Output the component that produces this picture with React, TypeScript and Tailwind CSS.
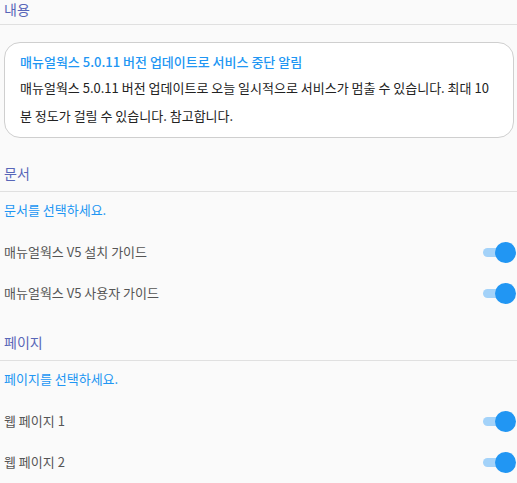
import React, { useState } from 'react';

const font = { fontFamily: '"Noto Sans CJK KR", "Noto Sans", sans-serif' };

interface ToggleProps {
    checked: boolean;
    onChange: () => void;
}

const Toggle: React.FC<ToggleProps> = ({ checked, onChange }) => (
    <button onClick={onChange} className="relative w-[34px] h-[20px] shrink-0">
        <span
            className={`absolute left-[1px] top-[6px] h-[9px] w-[26px] rounded-full ${
                checked ? 'bg-[#a3d2f9]' : 'bg-[#c8c8c8]'
            }`}
        />
        <span
            className={`absolute top-0 h-[21px] w-[21px] rounded-full ${
                checked ? 'left-[13px] bg-[#2196f3]' : 'left-0 bg-[#f1f1f1] shadow'
            }`}
        />
    </button>
);

interface SectionProps {
    title: string;
    hint: string;
    items: string[];
}

const Section: React.FC<SectionProps> = ({ title, hint, items }) => {
    const [on, setOn] = useState<boolean[]>(items.map(() => true));

    return (
        <div className="mt-[25px]">
            <div className="pl-[4px] pb-[8px] border-b border-[#e0e0e0] text-[14px] leading-[20px] text-[#5866b8]">
                {title}
            </div>
            <div className="pl-[4px] pt-[8px] text-[13px] leading-[20px] text-[#2196f3]">{hint}</div>
            <div className="mt-[11px]">
                {items.map((label, i) => (
                    <div key={label} className="h-[41px] flex items-center justify-between pl-[4px] pr-[1px]">
                        <span className="text-[13px] text-[#555555]">{label}</span>
                        <Toggle
                            checked={on[i]}
                            onChange={() => setOn(on.map((v, j) => (j === i ? !v : v)))}
                        />
                    </div>
                ))}
            </div>
        </div>
    );
};

export default function App() {
    return (
        <div className="w-[517px] h-[483px] overflow-hidden bg-[#fafafa]" style={font}>
            <div className="pl-[4px] pb-[6px] border-b border-[#e0e0e0] text-[14px] leading-[18px] text-[#5866b8]">
                내용
            </div>

            {/* Notice card */}
            <div className="mt-[17px] ml-[4px] mr-[3px] rounded-[16px] border border-[#cfcfcf] bg-white pt-[9px] pb-[7px] px-[15px]">
                <div className="text-[13px] leading-[20px] font-medium text-[#2196f3]">
                    매뉴얼웍스 5.0.11 버전 업데이트로 서비스 중단 알림
                </div>
                <p className="mt-[2px] text-[13px] leading-[28px] text-[#222222]">
                    매뉴얼웍스 5.0.11 버전 업데이트로 오늘 일시적으로 서비스가 멈출 수 있습니다. 최대 10 분 정도가 걸릴 수 있습니다. 참고합니다.
                </p>
            </div>

            <Section
                title="문서"
                hint="문서를 선택하세요."
                items={['매뉴얼웍스 V5 설치 가이드', '매뉴얼웍스 V5 사용자 가이드']}
            />
            <div className="-mt-[6px]">
                <Section title="페이지" hint="페이지를 선택하세요." items={['웹 페이지 1', '웹 페이지 2']} />
            </div>
        </div>
    );
}
